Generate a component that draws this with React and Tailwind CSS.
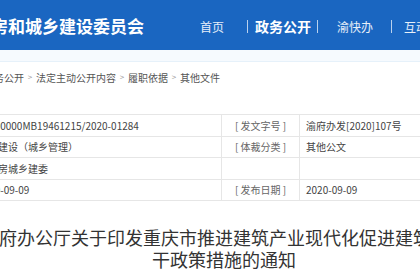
export default function App() {
  const font = "font-['Noto_Sans_CJK_SC','Noto_Sans',sans-serif]";
  const Sep = () => <span className="shrink-0 w-[12px] text-center text-[8px] text-[#999]">&gt;</span>;
  const rows = [
    { a: "11500000MB19461215/2020-01284", l: "[ 发文字号 ]", v: "渝府办发[2020]107号" },
    { a: "城乡建设（城乡管理）", l: "[ 体裁分类 ]", v: "其他公文" },
    { a: "市住房城乡建委", l: "", v: "" },
    { a: "2020-09-09", l: "[ 发布日期 ]", v: "2020-09-09" },
  ];
  return (
    <div className={`w-[420px] h-[280px] overflow-hidden bg-white ${font}`}>
      <div className="h-[50px] bg-[#1a66c1] flex items-center whitespace-nowrap">
        <span className="shrink-0 ml-[-77px] text-[17px] font-bold text-white leading-none">重庆市住房和城乡建设委员会</span>
        <div className="shrink-0 flex items-center mt-[3px] text-white">
          <span className="ml-[56px] text-[12px] text-white/90">首页</span>
          <span className="ml-[23px] w-px h-[13px] bg-white/70" />
          <span className="ml-[7px] text-[14px] font-bold">政务公开</span>
          <span className="ml-[6px] w-px h-[13px] bg-white/70" />
          <span className="ml-[19px] text-[12px] text-white/90">渝快办</span>
          <span className="ml-[18px] w-px h-[13px] bg-white/70" />
          <span className="ml-[12px] text-[12px] text-white/90">互动交流</span>
        </div>
      </div>
      <div className="h-[12px] bg-[#f6fafe] border-b border-[#e6f1fa]" />
      <div className="h-[30px] flex items-center whitespace-nowrap text-[10px] text-[#555] ml-[-16px]">
        <span className="shrink-0">政务公开</span>
        <Sep />
        <span className="shrink-0">法定主动公开内容</span>
        <Sep />
        <span className="shrink-0">履职依据</span>
        <Sep />
        <span className="shrink-0">其他文件</span>
      </div>
      <div className="h-[22px]" />
      <div className="ml-[-28px] w-[560px] border-t border-[#e6e6e6] text-[10px] text-[#444]">
        {rows.map((r, i) => (
          <div key={i} className="flex h-[21.5px] border-b border-[#e6e6e6] whitespace-nowrap">
            <div className="w-[249px] shrink-0 flex items-center pl-[6px]">{r.a}</div>
            <div className="w-[78px] shrink-0 flex items-center justify-center border-l border-[#e6e6e6] text-[#666]">{r.l}</div>
            <div className="flex-1 flex items-center pl-[6px] border-l border-[#e6e6e6]">{r.v}</div>
          </div>
        ))}
      </div>
      <div className="ml-[-111px] w-[670px] mt-[25px] text-center text-[18px] leading-[22px] text-[#333]">
        <div className="whitespace-nowrap">重庆市人民政府办公厅关于印发重庆市推进建筑产业现代化促进建筑业高质量发展若</div>
        <div className="whitespace-nowrap">干政策措施的通知</div>
      </div>
    </div>
  );
}
